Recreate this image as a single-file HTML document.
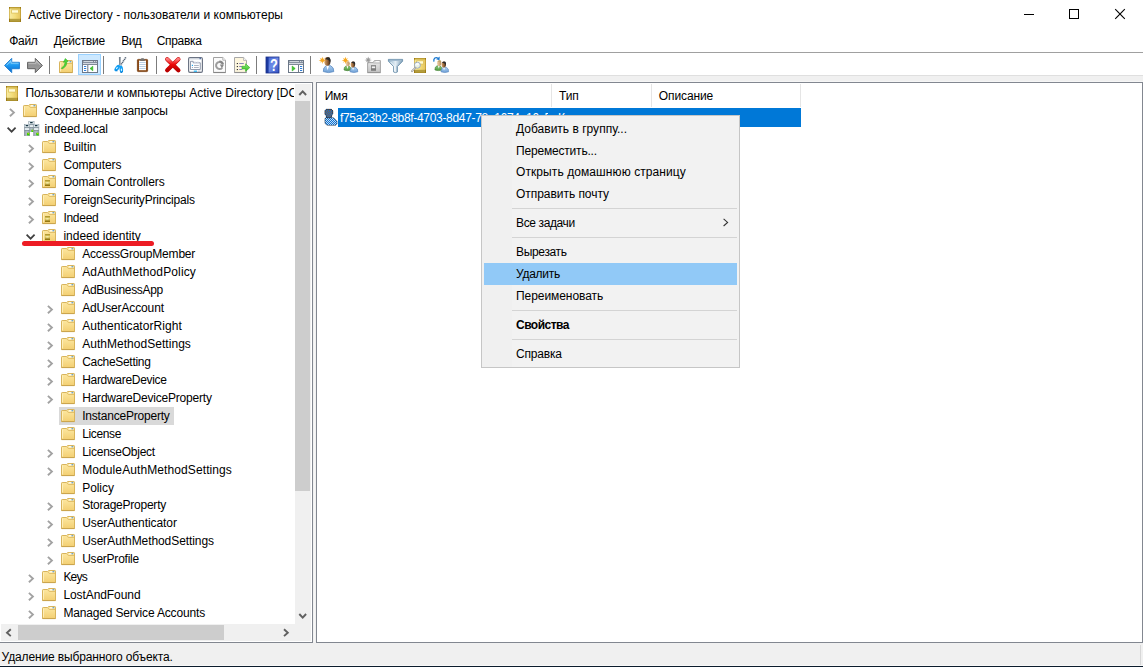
<!DOCTYPE html>
<html lang="ru"><head><meta charset="utf-8"><title>Active Directory - пользователи и компьютеры</title>
<style>
html,body{margin:0;padding:0;}
body{width:1143px;height:667px;position:relative;overflow:hidden;background:#fff;font-family:"Liberation Sans",sans-serif;font-size:12px;color:#000;}
.a{position:absolute;}
.t{position:absolute;white-space:nowrap;line-height:14px;height:14px;}
svg{position:absolute;overflow:visible;}
</style></head><body>

<svg width="0" height="0" style="left:0;top:0"><defs>
<linearGradient id="gFold" x1="0" y1="0" x2="0" y2="1"><stop offset="0" stop-color="#fde9a4"/><stop offset="1" stop-color="#f3cf72"/></linearGradient>
<linearGradient id="gBook" x1="0" y1="0" x2="1" y2="0"><stop offset="0" stop-color="#f8eca6"/><stop offset="0.5" stop-color="#f3de7c"/><stop offset="1" stop-color="#e4c25a"/></linearGradient>
<linearGradient id="gOuSq" x1="0" y1="0" x2="0" y2="1"><stop offset="0" stop-color="#a88c22"/><stop offset="0.45" stop-color="#ead97a"/><stop offset="1" stop-color="#866600"/></linearGradient>
<linearGradient id="gSrv" x1="0" y1="0" x2="1" y2="0"><stop offset="0" stop-color="#8c99a3"/><stop offset="0.5" stop-color="#b4c0c8"/><stop offset="1" stop-color="#8996a0"/></linearGradient>
<pattern id="dith" width="2" height="2" patternUnits="userSpaceOnUse"><rect width="2" height="2" fill="#8a5e3a"/><rect width="1" height="1" fill="#0a6cd2"/><rect x="1" y="1" width="1" height="1" fill="#0a6cd2"/></pattern>
<pattern id="dithb" width="2" height="2" patternUnits="userSpaceOnUse"><rect width="2" height="2" fill="#c8dcf0"/><rect width="1" height="1" fill="#0a74d8"/><rect x="1" y="1" width="1" height="1" fill="#0a74d8"/></pattern>

<g id="folder">
 <path d="M0.5,12.5 L0.5,2.2 Q0.5,1.5 1.2,1.5 L5.6,1.5 L6.8,0.5 L12.8,0.5 Q13.5,0.5 13.5,1.2 L13.5,12.5 Z" fill="url(#gFold)" stroke="#d8b45c" stroke-width="1"/>
 <path d="M5.8,1.8 L7.2,3.5 L13,3.5" fill="none" stroke="#e3c06a" stroke-width="1"/>
 <path d="M1.5,2.5 L1.5,11.5" stroke="#fff3c4" stroke-width="1" fill="none" opacity=".8"/>
 <rect x="8" y="1.3" width="2.6" height="1.05" fill="#fff"/><rect x="10.4" y="1.3" width="2" height="1.05" rx=".5" fill="#3c8ee6"/>
 <line x1="0.5" y1="12.6" x2="13.5" y2="12.6" stroke="#c9a44e" stroke-width="1"/>
</g>
<g id="ou">
 <use href="#folder"/>
 <rect x="3" y="5" width="5" height="6" fill="url(#gOuSq)"/>
 <rect x="4.2" y="7" width="2.4" height="1.6" fill="#f6eeb0" opacity=".8"/>
</g>
<g id="book">
 <rect x="0" y="0" width="12" height="15" fill="url(#gBook)"/>
 <rect x="0" y="0" width="12" height="1.5" fill="#bb9c34"/>
 <rect x="0" y="1.5" width="12" height=".7" fill="#dcc460" opacity=".8"/>
 <rect x="0" y="11.8" width="12" height="3.2" fill="#b39c3c"/>
 <rect x="0" y="14.3" width="12" height=".7" fill="#a88c28"/>
 <rect x="0" y="0" width="0.8" height="15" fill="#c29e30" opacity=".75"/>
 <rect x="11.2" y="0" width="0.8" height="15" fill="#b08c24" opacity=".75"/>
 <rect x="0" y="0" width="1" height="1.5" fill="#9c7a16"/><rect x="11" y="0" width="1" height="1.5" fill="#9c7a16"/>
 <rect x="0" y="11.8" width="1" height="3.2" fill="#9c7a16"/><rect x="11" y="11.8" width="1" height="3.2" fill="#9c7a16"/>
 <rect x="2.6" y="2.8" width="6.8" height="3.3" fill="#fffbd6" stroke="#dcc058" stroke-width=".8"/>
</g>
<g id="srv1">
 <rect x="0" y="0" width="6" height="12" fill="url(#gSrv)"/>
 <rect x="0.6" y="0.6" width="4.8" height="2.6" fill="#e2ecf1"/>
 <rect x="1.6" y="1.1" width="2.8" height="1.2" rx=".6" fill="#14313e"/>
 <rect x="0.8" y="4.2" width="4.4" height="1.7" fill="#ecf3f6"/>
 <rect x="0.6" y="3.5" width="4.8" height=".5" fill="#6f7c86"/>
 <rect x="0.6" y="6.4" width="4.8" height=".5" fill="#6f7c86"/>
 <rect x="3" y="8.8" width="2.4" height="2.6" fill="#35cf00"/>
 <rect x="3.8" y="8.8" width="1.4" height="1.2" fill="#c5e000" opacity=".8"/>
</g>
<g id="domain">
 <use href="#srv1" x="4.4" y="0" />
 <rect x="4.4" y="11" width="6" height="1" fill="#fff"/>
 <use href="#srv1" x="0" y="3"/>
 <use href="#srv1" x="9.2" y="3"/>
</g>
<g id="userdim">
 <path shape-rendering="crispEdges" d="M1,9.4 L2.6,8.4 L7.6,8.4 L9.6,8.8 L11.4,10.4 L13,12.6 L13,14.6 L11.6,16.4 L3.6,16.4 L1.4,15 L0.9,13 Z" fill="url(#dithb)"/>
 <path d="M1,9.4 L2.6,8.4 L7.6,8.4 L9.6,8.8 L11.4,10.4 L13,12.6 L13,14.6 L11.6,16.4 L3.6,16.4 L1.4,15 L0.9,13 Z" fill="none" stroke="#0d2a4a" stroke-width=".9" opacity=".6"/>
 <path shape-rendering="crispEdges" d="M2,0.3 L7.4,0.3 L8.8,1.8 L8.8,5 L7.8,6.6 L7.2,8.8 L2.8,8.8 L2,6.6 L0.8,5 L0.8,1.8 Z" fill="url(#dith)"/>
 <path d="M2,0.3 L7.4,0.3 L8.8,1.8 L8.8,5 L7.8,6.6 L7.2,8.8 L2.8,8.8 L2,6.6 L0.8,5 L0.8,1.8 Z" fill="none" stroke="#14202e" stroke-width=".9" opacity=".6"/>
</g>
</defs></svg>

<div class="a" style="left:0;top:52px;width:1143px;height:1px;background:#a0a0a0"></div>
<div class="a" style="left:0;top:75px;width:1143px;height:1px;background:#dfdfdf"></div>
<div class="a" style="left:0;top:76px;width:1143px;height:6px;background:#f0f0f0"></div>
<div class="a" style="left:0;top:81px;width:1143px;height:1px;background:#f6f6f6"></div>
<div class="a" style="left:313px;top:76px;width:3px;height:567px;background:#f0f0f0"></div>
<div class="a" style="left:314px;top:83px;width:1px;height:559px;background:#f7f7f7"></div>
<div class="a" style="left:-1px;top:82px;width:312px;height:559px;border:1px solid #828790;background:#fff;box-sizing:content-box"></div>
<div class="a" style="left:316px;top:82px;width:825px;height:559px;border:1px solid #828790;background:#fff;box-sizing:content-box"></div>
<div class="a" style="left:0;top:643px;width:1143px;height:23px;background:#f0f0f0"></div>
<div class="a" style="left:0;top:665px;width:1143px;height:1px;background:#f8f8f8"></div>
<div class="a" style="left:0;top:666px;width:1143px;height:1px;background:#0c1c2c"></div>
<div class="a" style="left:1140px;top:645px;width:1px;height:20px;background:#d7d7d7"></div>
<svg style="left:0;top:0" width="1143" height="30"><g stroke="#000" stroke-width="1" fill="none" shape-rendering="crispEdges"><line x1="1024" y1="14.5" x2="1034" y2="14.5"/><rect x="1069.5" y="9.5" width="9" height="9"/></g><g stroke="#000" stroke-width="1.1" fill="none"><line x1="1115.2" y1="9.2" x2="1124.8" y2="18.8"/><line x1="1124.8" y1="9.2" x2="1115.2" y2="18.8"/></g></svg>
<svg style="left:0;top:0" width="460" height="80">
<defs>
<linearGradient id="gBack" x1="0" y1="0" x2="0" y2="1"><stop offset="0" stop-color="#6ccaff"/><stop offset="0.5" stop-color="#1c98f0"/><stop offset="1" stop-color="#0a68cc"/></linearGradient>
<linearGradient id="gFwd" x1="0" y1="0" x2="0" y2="1"><stop offset="0" stop-color="#bcbcbc"/><stop offset="0.5" stop-color="#949494"/><stop offset="1" stop-color="#a4a4a4"/></linearGradient>
<linearGradient id="gRed" x1="0" y1="0" x2="0" y2="1"><stop offset="0" stop-color="#ff7a7a"/><stop offset="0.45" stop-color="#f00808"/><stop offset="1" stop-color="#b80000"/></linearGradient>
<linearGradient id="gHelp" x1="0" y1="0" x2="1" y2="1"><stop offset="0" stop-color="#3f5fd0"/><stop offset="0.5" stop-color="#6c8ae6"/><stop offset="1" stop-color="#2f4fc0"/></linearGradient>
<linearGradient id="gGreenA" x1="0" y1="0" x2="0" y2="1"><stop offset="0" stop-color="#8cf27a"/><stop offset="1" stop-color="#2fb41e"/></linearGradient>
<linearGradient id="gFun" x1="0" y1="0" x2="1" y2="0"><stop offset="0" stop-color="#8eb0c8"/><stop offset="0.5" stop-color="#e4eef5"/><stop offset="1" stop-color="#7e9fb8"/></linearGradient>
<linearGradient id="gBody" x1="0" y1="0" x2="0" y2="1"><stop offset="0" stop-color="#a9cdf0"/><stop offset="1" stop-color="#6fa0d6"/></linearGradient>
<linearGradient id="gBodyG" x1="0" y1="0" x2="0" y2="1"><stop offset="0" stop-color="#8cc878"/><stop offset="1" stop-color="#4f9a3c"/></linearGradient>
<linearGradient id="gFace" x1="0" y1="0" x2="1" y2="0"><stop offset="0" stop-color="#d9a56c"/><stop offset="0.6" stop-color="#8a5a30"/><stop offset="1" stop-color="#3a2a20"/></linearGradient>
<linearGradient id="gFaceL" x1="0" y1="0" x2="1" y2="0"><stop offset="0" stop-color="#f0d2a8"/><stop offset="1" stop-color="#b89060"/></linearGradient>
<linearGradient id="gGrayF" x1="0" y1="0" x2="0" y2="1"><stop offset="0" stop-color="#ececec"/><stop offset="1" stop-color="#c4c4c4"/></linearGradient>
<g id="star"><path d="M0,-3.6 L0.8,-1.2 L2.6,-2.6 L1.3,-0.6 L3.7,0 L1.3,0.7 L2.6,2.6 L0.7,1.3 L0,3.7 L-0.7,1.3 L-2.6,2.6 L-1.3,0.7 L-3.7,0 L-1.3,-0.6 L-2.6,-2.6 L-0.8,-1.2 Z"/></g>
</defs>
<!-- separators -->
<g fill="#7c7c7c"><rect x="49" y="56" width="1" height="18"/><rect x="103" y="56" width="1" height="18"/><rect x="156" y="56" width="1" height="18"/><rect x="256" y="56" width="1" height="18"/><rect x="310" y="56" width="1" height="18"/></g>
<!-- back -->
<path d="M4.6,65.5 L11.7,58.4 L11.7,62.3 L19.4,62.3 L19.4,68.7 L11.7,68.7 L11.7,72.6 Z" fill="url(#gBack)" stroke="#1f7ed2" stroke-width="1" stroke-linejoin="round"/>
<path d="M6.5,65.3 L11,60.8 L11,63.2 L18.6,63.2" fill="none" stroke="#9fdcff" stroke-width=".8" opacity=".9"/>
<!-- forward -->
<path d="M42.4,65.5 L35.3,58.4 L35.3,62.3 L27.6,62.3 L27.6,68.7 L35.3,68.7 L35.3,72.6 Z" fill="url(#gFwd)" stroke="#5e5e5e" stroke-width="1" stroke-linejoin="round"/>
<path d="M28.4,63.2 L36,63.2 L36,60.8 L40.5,65.3" fill="none" stroke="#d0d0d0" stroke-width=".8" opacity=".8"/>
<!-- up folder -->
<g transform="translate(59,60)"><use href="#folder"/></g>
<path d="M61.3,68.3 Q65.3,65.6 65.2,61.8 L63.4,62.3 L65.4,58.5 L68.2,61.4 L66.7,61.6 Q67.2,66.4 62,69 Z" fill="#4ad83a" stroke="#2fb022" stroke-width=".6" stroke-linejoin="round"/>
<!-- show tree (highlighted) -->
<rect x="78.5" y="54.5" width="22" height="20" fill="#cce8ff" stroke="#99d1ff" stroke-width="1"/>
<g transform="translate(82,60)">
 <rect x="0.5" y="0.5" width="15" height="12" fill="#fff" stroke="#6c7888" stroke-width="1"/>
 <rect x="1" y="1" width="14" height="4" fill="#7f8a99"/>
 <rect x="1.5" y="1.15" width="9.5" height=".9" fill="#dfe4ea"/><rect x="12" y="1.1" width=".9" height=".9" fill="#eef1f5"/><rect x="13.8" y="1.1" width=".9" height=".9" fill="#eef1f5"/>
 <rect x="1" y="2.95" width="14" height="1" fill="#d8dde5"/>
 <rect x="5.3" y="5" width="1" height="7.2" fill="#6c7888"/>
 <rect x="2" y="6" width="2.2" height="1" fill="#2f7ed8"/><rect x="2" y="8" width="2.2" height="1" fill="#2f7ed8"/><rect x="2" y="10" width="2.2" height="1" fill="#2f7ed8"/>
 <path d="M10.8,6.2 L10.8,10.8 L8,8.5 Z" fill="#3fc52f" stroke="#2fae22" stroke-width=".6" stroke-linejoin="round"/>
</g>
<!-- scissors -->
<g>
 <path d="M118.9,57.1 L120.9,57.1 L120.6,62 L120.2,65.6 L119.2,65.6 Z" fill="#76828e"/>
 <path d="M120.2,57.6 L120.6,57.6 L120.3,63 Z" fill="#cfd6dd"/>
 <path d="M125.8,57.4 L120.6,65.2" stroke="#46566a" stroke-width="1.7" stroke-dasharray="1.1,0.7" fill="none"/>
 <ellipse cx="117.2" cy="68.1" rx="2" ry="3.7" transform="rotate(36 117.2 68.1)" fill="#12a0f6"/>
 <ellipse cx="116.9" cy="68" rx=".6" ry="1.2" transform="rotate(36 116.9 68)" fill="#fff"/>
 <ellipse cx="121.3" cy="69.2" rx="1.75" ry="3.7" transform="rotate(-6 121.3 69.2)" fill="#12a0f6"/>
 <ellipse cx="121.4" cy="69.8" rx=".55" ry="1.35" fill="#fff"/>
 <path d="M120.2,72 Q121.6,73.2 122.8,71.4" stroke="#0a5fae" stroke-width=".7" fill="none"/>
 <path d="M115.4,69.6 Q116,71 117.4,71" stroke="#0a6cc4" stroke-width=".6" fill="none"/>
</g>
<!-- clipboard -->
<g>
 <rect x="137.4" y="59.4" width="10.2" height="12.2" rx=".8" fill="#8a4a16" stroke="#7a3f10" stroke-width=".8"/>
 <rect x="139" y="60.6" width="7" height="9.6" fill="#fff"/>
 <g fill="#a9c4dc"><rect x="139.3" y="62.2" width="6.4" height=".8"/><rect x="139.3" y="64.2" width="6.4" height=".8"/><rect x="139.3" y="66.2" width="6.4" height=".8"/><rect x="139.3" y="68.2" width="6.4" height=".8"/></g>
 <rect x="140.2" y="59.1" width="4.6" height="1.8" fill="#6e6e6e"/><rect x="141.2" y="58" width="2.6" height="1.3" fill="#8e8e8e"/>
</g>
<!-- delete X -->
<g stroke-linecap="round">
 <path d="M167.2,59.2 L178.4,70.3 M178.4,59.2 L167.2,70.3" stroke="#c40000" stroke-width="4.2" fill="none"/>
 <path d="M167.2,59.2 L178.4,70.3 M178.4,59.2 L167.2,70.3" stroke="url(#gRed)" stroke-width="3.2" fill="none"/>
</g>
<!-- properties -->
<g transform="translate(188,57)">
 <rect x="0.6" y="0.6" width="13.8" height="14.8" rx="1.3" fill="#fff" stroke="#6c7484" stroke-width="1.2"/>
 <rect x="1.4" y="1.4" width="12.2" height="1" fill="#c9d0da"/><rect x="11.6" y="0.8" width="1.2" height="1.4" fill="#3a5a9c"/>
 <path d="M2.5,12.5 L2.5,4.3 L5.2,4.3 L5.2,5.8 L12.3,5.8 L12.3,12.5 Z" fill="#fdfdff" stroke="#8790a4" stroke-width=".9"/>
 <rect x="6" y="4.6" width="2" height="1" fill="#d9deea"/><rect x="8.8" y="4.6" width="2" height="1" fill="#d9deea"/>
 <rect x="3.8" y="7.8" width="1.2" height="1.2" fill="#1fa8f0"/><rect x="6" y="8" width="4.8" height=".8" fill="#9aa2b2"/>
 <rect x="3.9" y="10" width="1" height="1" fill="#9aa2b2"/><rect x="6" y="10.1" width="4.8" height=".8" fill="#9aa2b2"/>
 <rect x="5.8" y="13.6" width="3.2" height="1.2" fill="#1fb4f5"/><rect x="10" y="13.6" width="2.6" height="1.2" fill="#c0c4cc"/>
</g>
<!-- refresh doc -->
<g transform="translate(213,57)">
 <path d="M0.5,0.5 L9.8,0.5 L12.5,3.2 L12.5,15.4 L0.5,15.4 Z" fill="#fbfbfb" stroke="#a2a2a2" stroke-width="1"/>
 <path d="M9.8,0.5 L9.8,3.2 L12.5,3.2" fill="#fff" stroke="#a2a2a2" stroke-width=".8"/>
 <path d="M0.3,15.6 L12.7,15.6" stroke="#7e7e7e" stroke-width=".9"/>
 <path d="M9.2,10.8 A3.5,3.5 0 1 1 9.9,7.4" fill="none" stroke="#9c9c9c" stroke-width="2"/>
 <path d="M6.4,4.6 A3.5,3.5 0 0 1 9.9,7.4" fill="none" stroke="#868686" stroke-width="2"/>
 <path d="M6.8,7.6 L10.9,7.8 L9,11.4 Z" fill="#8a8a8a"/>
</g>
<!-- export list -->
<g transform="translate(234,57)">
 <path d="M0.5,0.5 L9.6,0.5 L12.5,3.4 L12.5,15.4 L0.5,15.4 Z" fill="#fdf6de" stroke="#a8a8a8" stroke-width="1"/>
 <path d="M9.6,0.5 L9.6,3.4 L12.5,3.4" fill="#fff" stroke="#a8a8a8" stroke-width=".8"/>
 <path d="M0.3,15.6 L12.7,15.6" stroke="#8a8a8a" stroke-width=".9"/>
 <g fill="#222"><rect x="2.8" y="6" width="1.1" height="1.1"/><rect x="2.8" y="9" width="1.1" height="1.1"/><rect x="2.8" y="12" width="1.1" height="1.1"/></g>
 <g fill="#7a78b8"><rect x="5.2" y="6.1" width="4.6" height=".9"/><rect x="5.2" y="9.1" width="3" height=".9"/><rect x="5.2" y="12.1" width="3" height=".9"/></g>
 <path d="M8,9.3 L11.6,9.3 L11.6,6.8 L15.8,10.6 L11.6,14.4 L11.6,11.9 L8,11.9 Z" fill="url(#gGreenA)" stroke="#3cb82c" stroke-width=".7" stroke-linejoin="round"/>
</g>
<!-- help -->
<g transform="translate(266,57)">
 <rect x="0" y="0" width="13" height="16" fill="url(#gHelp)"/>
 <rect x="0" y="0" width="2.6" height="16" fill="#1c3aa0"/>
 <rect x="0" y="0" width="13" height="16" fill="none" stroke="#1a2f8a" stroke-width=".8"/>
 <text transform="translate(7.9,13.8) scale(0.78,1)" x="0" y="0" text-anchor="middle" font-family="Liberation Sans, sans-serif" font-weight="bold" font-size="16.4px" fill="#fff">?</text>
</g>
<!-- action pane -->
<g transform="translate(288,60)">
 <rect x="0.5" y="0.5" width="15" height="12" fill="#fff" stroke="#6c7888" stroke-width="1"/>
 <rect x="1" y="1" width="14" height="4" fill="#7f8a99"/>
 <rect x="1.5" y="1.15" width="9.5" height=".9" fill="#dfe4ea"/><rect x="12" y="1.1" width=".9" height=".9" fill="#eef1f5"/><rect x="13.8" y="1.1" width=".9" height=".9" fill="#eef1f5"/>
 <rect x="1" y="2.95" width="14" height="1" fill="#d8dde5"/>
 <rect x="10" y="5" width="1" height="7.2" fill="#6c7888"/>
 <rect x="12" y="6" width="2.2" height="1" fill="#2f7ed8"/><rect x="12" y="8" width="2.2" height="1" fill="#2f7ed8"/><rect x="12" y="10" width="2.2" height="1" fill="#2f7ed8"/>
 <path d="M4.2,6 L4.2,11 L7.2,8.5 Z" fill="#3fc52f" stroke="#2fae22" stroke-width=".6" stroke-linejoin="round"/>
</g>
<!-- new user -->
<g>
 <path d="M323.3,71.6 Q323,67.2 326.2,65.7 L330.6,65.7 Q334,67.2 333.8,71.6 Q328.5,73.6 323.3,71.6 Z" fill="url(#gBody)" stroke="#4f80ba" stroke-width=".7"/>
 <path d="M326.4,65.8 L327.6,70.2 L329,65.8 Z" fill="#fff"/>
 <ellipse cx="327.4" cy="61.4" rx="3" ry="4.3" fill="url(#gFace)"/>
 <path d="M325.2,59.2 Q326.8,56.4 329.6,57.6 Q331.2,59.4 330.2,62.6 Q329.6,59.6 325.2,59.2 Z" fill="#2b2b2b"/>
 <use href="#star" x="322.3" y="60.3" fill="#f7a81e"/>
</g>
<!-- new group -->
<g>
 <path d="M344,70 Q343.8,66.8 346,65.9 L349,65.9 Q351,66.8 350.8,70 Q347.4,71.4 344,70 Z" fill="url(#gBodyG)" stroke="#3f7e30" stroke-width=".6"/>
 <path d="M346.6,66 L347.4,69 L348.3,66 Z" fill="#fff"/>
 <ellipse cx="347.8" cy="63.6" rx="2" ry="2.7" fill="url(#gFaceL)"/>
 <path d="M350,71.8 Q349.8,68.4 352,67.5 L355.6,67.5 Q358,68.4 357.8,71.8 Q353.9,73.3 350,71.8 Z" fill="url(#gBody)" stroke="#4f80ba" stroke-width=".6"/>
 <path d="M352.2,67.6 L353,70.6 L354,67.6 Z" fill="#fff"/>
 <ellipse cx="352.9" cy="64.5" rx="2.2" ry="3" fill="url(#gFace)"/>
 <path d="M351.2,62.8 Q352.6,60.8 354.6,61.8 Q355.6,63 355,65 Q354.4,63 351.2,62.8 Z" fill="#2b2b2b"/>
 <use href="#star" x="345.4" y="60.3" fill="#f7a81e"/>
</g>
<!-- new OU -->
<g>
 <path d="M367.6,72.4 L367.6,62.6 L373.2,62.6 L374.4,60.6 L380.4,60.6 L380.4,72.4 Z" fill="url(#gGrayF)" stroke="#9c9c9c" stroke-width=".9"/>
 <path d="M373.4,63 L380,63" stroke="#a8a8a8" stroke-width=".7"/>
 <rect x="375.8" y="61.2" width="3.4" height=".9" fill="#fff"/>
 <rect x="371" y="65.2" width="5" height="5.6" fill="#7c7c7c"/><rect x="371.8" y="66.4" width="3.4" height="1.8" fill="#f2f2f2"/>
 <path d="M367.3,72.7 L380.7,72.7" stroke="#8a8a8a" stroke-width=".8"/>
 <use href="#star" x="368.2" y="60" fill="#9a9a9a"/>
</g>
<!-- filter -->
<g>
 <path d="M388.4,59.4 L402.6,59.4 L402.6,61.2 L397.4,66.6 L397.4,72 Q395.5,73.2 393.6,72 L393.6,66.6 L388.4,61.2 Z" fill="url(#gFun)" stroke="#6a8eaa" stroke-width=".9" stroke-linejoin="round"/>
 <rect x="388.6" y="59.5" width="13.8" height="1.5" fill="#7f9fb8"/>
 <rect x="389.4" y="59.9" width="12.2" height=".6" fill="#c4d6e4"/>
 <path d="M390.6,62 L394.6,66.2 L394.6,71.4" stroke="#f6fafc" stroke-width=".9" fill="none"/>
 <path d="M400.6,62 L396.6,66.2 L396.6,71.6" stroke="#7f9fb8" stroke-width=".6" fill="none" opacity=".7"/>
</g>
<!-- find -->
<g>
 <g transform="translate(414,58)"><use href="#book"/></g>
 <path d="M415.4,67.8 L411.9,71.2" stroke="#a8a8a8" stroke-width="1.9" stroke-linecap="round"/>
 <path d="M415.2,68 L412,71.1" stroke="#f4f4f4" stroke-width="1" stroke-dasharray=".9,.7"/>
 <circle cx="417.4" cy="65.2" r="3" fill="#e4f0f8" fill-opacity=".92" stroke="#8f9eb4" stroke-width=".8"/>
 <ellipse cx="417.2" cy="64.2" rx="1.8" ry="1.2" fill="#ffffff" opacity=".75"/>
 <ellipse cx="417.5" cy="66.3" rx="1.6" ry="1.1" fill="#f2f4c8" opacity=".6"/>
</g>
<!-- add to group -->
<g>
 <path d="M434.9,69.9 Q434.7,66.7 437,65.8 L440,65.8 Q442,66.7 441.8,69.9 Q438.4,71.3 434.9,69.9 Z" fill="url(#gBodyG)" stroke="#3f7e30" stroke-width=".6"/>
 <path d="M438,65.8 L438.8,68.8 L439.7,65.8 Z" fill="#fff"/>
 <ellipse cx="439.2" cy="63.3" rx="2.1" ry="2.8" fill="url(#gFaceL)"/>
 <path d="M437.4,61.8 Q438.8,59.8 440.8,60.6 Q441.4,61.4 441.2,62.2 Q439.8,61.2 437.4,61.8 Z" fill="#b8a060"/>
 <path d="M441,71.8 Q440.8,68.4 443,67.5 L446.6,67.5 Q448.8,68.4 448.6,71.8 Q444.8,73.3 441,71.8 Z" fill="url(#gBody)" stroke="#4f80ba" stroke-width=".6"/>
 <path d="M443.2,67.6 L444,70.6 L445,67.6 Z" fill="#fff"/>
 <ellipse cx="443.8" cy="64.4" rx="2.2" ry="3" fill="url(#gFace)"/>
 <path d="M442,62.8 Q443.4,60.8 445.4,61.8 Q446.4,63 445.8,65 Q445.2,63 442,62.8 Z" fill="#2b2b2b"/>
 <path d="M433.9,61.6 C433.2,58.2 435.8,56.7 438,58.2" fill="none" stroke="#1a78d0" stroke-width="1.3"/>
 <path d="M439.7,56.6 L439.5,60.3 L436.2,59.3 Z" fill="#1a78d0"/>
</g>
</svg>

<div class="a" style="left:295px;top:84px;width:16px;height:540px;background:#f0f0f0"></div>
<div class="a" style="left:295px;top:101px;width:15px;height:390px;background:#cdcdcd"></div>
<div class="a" style="left:1px;top:624px;width:310px;height:17px;background:#f0f0f0"></div>
<div class="a" style="left:18px;top:625px;width:206px;height:15px;background:#cdcdcd"></div>
<svg style="left:0;top:0" width="320" height="667"><g fill="none" stroke="#606060" stroke-width="1.9"><polyline points="299.3,95 302.7,91.3 306.1,95"/><polyline points="299.3,614 302.7,617.7 306.1,614"/><polyline points="10.8,629.3 7,632.7 10.8,636.1"/><polyline points="284,629.3 287.8,632.7 284,636.1"/></g></svg>
<svg style="left:6px;top:86px" width="12" height="15"><use href="#book"/></svg>
<span class="t" id="tr0" style="left:25.4px;top:86px;width:268.6px;overflow:hidden;letter-spacing:-0.009px;">Пользователи и компьютеры Active Directory [DC1.indeed.local]</span>
<svg style="left:8.9px;top:108px" width="8" height="12"><polyline points="0.9,0.9 4.9,4.6 0.9,8.3" fill="none" stroke="#a2a2a2" stroke-width="1.9"/></svg>
<svg style="left:23px;top:104px" width="14" height="13"><use href="#folder"/></svg>
<span class="t" id="tr1" style="left:44.4px;top:104px;letter-spacing:-0.157px;">Сохраненные запросы</span>
<svg style="left:6.9px;top:126.5px" width="12" height="8"><polyline points="0.6,0.6 4.6,4.7 8.6,0.6" fill="none" stroke="#404040" stroke-width="1.7"/></svg>
<svg style="left:24px;top:121px" width="16" height="16"><use href="#domain"/></svg>
<span class="t" id="tr2" style="left:44.4px;top:122px;letter-spacing:-0.047px;">indeed.local</span>
<svg style="left:27.9px;top:144px" width="8" height="12"><polyline points="0.9,0.9 4.9,4.6 0.9,8.3" fill="none" stroke="#a2a2a2" stroke-width="1.9"/></svg>
<svg style="left:42px;top:140px" width="14" height="13"><use href="#folder"/></svg>
<span class="t" id="tr3" style="left:63.4px;top:140px;letter-spacing:0.030px;">Builtin</span>
<svg style="left:27.9px;top:162px" width="8" height="12"><polyline points="0.9,0.9 4.9,4.6 0.9,8.3" fill="none" stroke="#a2a2a2" stroke-width="1.9"/></svg>
<svg style="left:42px;top:158px" width="14" height="13"><use href="#folder"/></svg>
<span class="t" id="tr4" style="left:63.4px;top:158px;letter-spacing:-0.076px;">Computers</span>
<svg style="left:27.9px;top:179px" width="8" height="12"><polyline points="0.9,0.9 4.9,4.6 0.9,8.3" fill="none" stroke="#a2a2a2" stroke-width="1.9"/></svg>
<svg style="left:42px;top:175px" width="14" height="13"><use href="#ou"/></svg>
<span class="t" id="tr5" style="left:63.4px;top:175px;letter-spacing:-0.084px;">Domain Controllers</span>
<svg style="left:27.9px;top:197px" width="8" height="12"><polyline points="0.9,0.9 4.9,4.6 0.9,8.3" fill="none" stroke="#a2a2a2" stroke-width="1.9"/></svg>
<svg style="left:42px;top:193px" width="14" height="13"><use href="#folder"/></svg>
<span class="t" id="tr6" style="left:63.4px;top:193px;letter-spacing:-0.186px;">ForeignSecurityPrincipals</span>
<svg style="left:27.9px;top:215px" width="8" height="12"><polyline points="0.9,0.9 4.9,4.6 0.9,8.3" fill="none" stroke="#a2a2a2" stroke-width="1.9"/></svg>
<svg style="left:42px;top:211px" width="14" height="13"><use href="#ou"/></svg>
<span class="t" id="tr7" style="left:63.4px;top:211px;letter-spacing:-0.267px;">Indeed</span>
<svg style="left:25.9px;top:233.5px" width="12" height="8"><polyline points="0.6,0.6 4.6,4.7 8.6,0.6" fill="none" stroke="#404040" stroke-width="1.7"/></svg>
<svg style="left:42px;top:229px" width="14" height="13"><use href="#ou"/></svg>
<span class="t" id="tr8" style="left:63.4px;top:229px;letter-spacing:0.001px;">indeed identity</span>
<svg style="left:61px;top:247px" width="14" height="13"><use href="#folder"/></svg>
<span class="t" id="tr9" style="left:82.2px;top:247px;letter-spacing:-0.179px;">AccessGroupMember</span>
<svg style="left:61px;top:265px" width="14" height="13"><use href="#folder"/></svg>
<span class="t" id="tr10" style="left:82.2px;top:265px;letter-spacing:0.133px;">AdAuthMethodPolicy</span>
<svg style="left:61px;top:283px" width="14" height="13"><use href="#folder"/></svg>
<span class="t" id="tr11" style="left:82.2px;top:283px;letter-spacing:-0.303px;">AdBusinessApp</span>
<svg style="left:46.7px;top:305px" width="8" height="12"><polyline points="0.9,0.9 4.9,4.6 0.9,8.3" fill="none" stroke="#a2a2a2" stroke-width="1.9"/></svg>
<svg style="left:61px;top:301px" width="14" height="13"><use href="#folder"/></svg>
<span class="t" id="tr12" style="left:82.2px;top:301px;letter-spacing:-0.129px;">AdUserAccount</span>
<svg style="left:46.7px;top:323px" width="8" height="12"><polyline points="0.9,0.9 4.9,4.6 0.9,8.3" fill="none" stroke="#a2a2a2" stroke-width="1.9"/></svg>
<svg style="left:61px;top:319px" width="14" height="13"><use href="#folder"/></svg>
<span class="t" id="tr13" style="left:82.2px;top:319px;letter-spacing:0.048px;">AuthenticatorRight</span>
<svg style="left:46.7px;top:341px" width="8" height="12"><polyline points="0.9,0.9 4.9,4.6 0.9,8.3" fill="none" stroke="#a2a2a2" stroke-width="1.9"/></svg>
<svg style="left:61px;top:337px" width="14" height="13"><use href="#folder"/></svg>
<span class="t" id="tr14" style="left:82.2px;top:337px;letter-spacing:0.035px;">AuthMethodSettings</span>
<svg style="left:46.7px;top:359px" width="8" height="12"><polyline points="0.9,0.9 4.9,4.6 0.9,8.3" fill="none" stroke="#a2a2a2" stroke-width="1.9"/></svg>
<svg style="left:61px;top:355px" width="14" height="13"><use href="#folder"/></svg>
<span class="t" id="tr15" style="left:82.2px;top:355px;letter-spacing:-0.312px;">CacheSetting</span>
<svg style="left:46.7px;top:377px" width="8" height="12"><polyline points="0.9,0.9 4.9,4.6 0.9,8.3" fill="none" stroke="#a2a2a2" stroke-width="1.9"/></svg>
<svg style="left:61px;top:373px" width="14" height="13"><use href="#folder"/></svg>
<span class="t" id="tr16" style="left:82.2px;top:373px;letter-spacing:-0.300px;">HardwareDevice</span>
<svg style="left:46.7px;top:395px" width="8" height="12"><polyline points="0.9,0.9 4.9,4.6 0.9,8.3" fill="none" stroke="#a2a2a2" stroke-width="1.9"/></svg>
<svg style="left:61px;top:391px" width="14" height="13"><use href="#folder"/></svg>
<span class="t" id="tr17" style="left:82.2px;top:391px;letter-spacing:-0.207px;">HardwareDeviceProperty</span>
<div class="a" style="left:59px;top:407px;width:115px;height:18px;background:#d9d9d9"></div>
<svg style="left:61px;top:409px" width="14" height="13"><use href="#folder"/></svg>
<span class="t" id="tr18" style="left:82.2px;top:409px;letter-spacing:-0.207px;">InstanceProperty</span>
<svg style="left:61px;top:427px" width="14" height="13"><use href="#folder"/></svg>
<span class="t" id="tr19" style="left:82.2px;top:427px;letter-spacing:-0.368px;">License</span>
<svg style="left:46.7px;top:449px" width="8" height="12"><polyline points="0.9,0.9 4.9,4.6 0.9,8.3" fill="none" stroke="#a2a2a2" stroke-width="1.9"/></svg>
<svg style="left:61px;top:445px" width="14" height="13"><use href="#folder"/></svg>
<span class="t" id="tr20" style="left:82.2px;top:445px;letter-spacing:-0.257px;">LicenseObject</span>
<svg style="left:46.7px;top:467px" width="8" height="12"><polyline points="0.9,0.9 4.9,4.6 0.9,8.3" fill="none" stroke="#a2a2a2" stroke-width="1.9"/></svg>
<svg style="left:61px;top:463px" width="14" height="13"><use href="#folder"/></svg>
<span class="t" id="tr21" style="left:82.2px;top:463px;letter-spacing:0.098px;">ModuleAuthMethodSettings</span>
<svg style="left:61px;top:481px" width="14" height="13"><use href="#folder"/></svg>
<span class="t" id="tr22" style="left:82.2px;top:481px;letter-spacing:-0.053px;">Policy</span>
<svg style="left:46.7px;top:502px" width="8" height="12"><polyline points="0.9,0.9 4.9,4.6 0.9,8.3" fill="none" stroke="#a2a2a2" stroke-width="1.9"/></svg>
<svg style="left:61px;top:498px" width="14" height="13"><use href="#folder"/></svg>
<span class="t" id="tr23" style="left:82.2px;top:498px;letter-spacing:-0.239px;">StorageProperty</span>
<svg style="left:46.7px;top:520px" width="8" height="12"><polyline points="0.9,0.9 4.9,4.6 0.9,8.3" fill="none" stroke="#a2a2a2" stroke-width="1.9"/></svg>
<svg style="left:61px;top:516px" width="14" height="13"><use href="#folder"/></svg>
<span class="t" id="tr24" style="left:82.2px;top:516px;letter-spacing:-0.085px;">UserAuthenticator</span>
<svg style="left:46.7px;top:538px" width="8" height="12"><polyline points="0.9,0.9 4.9,4.6 0.9,8.3" fill="none" stroke="#a2a2a2" stroke-width="1.9"/></svg>
<svg style="left:61px;top:534px" width="14" height="13"><use href="#folder"/></svg>
<span class="t" id="tr25" style="left:82.2px;top:534px;letter-spacing:-0.073px;">UserAuthMethodSettings</span>
<svg style="left:46.7px;top:556px" width="8" height="12"><polyline points="0.9,0.9 4.9,4.6 0.9,8.3" fill="none" stroke="#a2a2a2" stroke-width="1.9"/></svg>
<svg style="left:61px;top:552px" width="14" height="13"><use href="#folder"/></svg>
<span class="t" id="tr26" style="left:82.2px;top:552px;letter-spacing:-0.233px;">UserProfile</span>
<svg style="left:27.9px;top:574px" width="8" height="12"><polyline points="0.9,0.9 4.9,4.6 0.9,8.3" fill="none" stroke="#a2a2a2" stroke-width="1.9"/></svg>
<svg style="left:42px;top:570px" width="14" height="13"><use href="#folder"/></svg>
<span class="t" id="tr27" style="left:63.4px;top:570px;letter-spacing:-0.797px;">Keys</span>
<svg style="left:27.9px;top:592px" width="8" height="12"><polyline points="0.9,0.9 4.9,4.6 0.9,8.3" fill="none" stroke="#a2a2a2" stroke-width="1.9"/></svg>
<svg style="left:42px;top:588px" width="14" height="13"><use href="#folder"/></svg>
<span class="t" id="tr28" style="left:63.4px;top:588px;letter-spacing:-0.080px;">LostAndFound</span>
<svg style="left:27.9px;top:610px" width="8" height="12"><polyline points="0.9,0.9 4.9,4.6 0.9,8.3" fill="none" stroke="#a2a2a2" stroke-width="1.9"/></svg>
<svg style="left:42px;top:606px" width="14" height="13"><use href="#folder"/></svg>
<span class="t" id="tr29" style="left:63.4px;top:606px;letter-spacing:-0.159px;">Managed Service Accounts</span>
<div class="a" style="left:551px;top:84px;width:1px;height:23px;background:#e5e5e5"></div>
<div class="a" style="left:651px;top:84px;width:1px;height:23px;background:#e5e5e5"></div>
<div class="a" style="left:800px;top:84px;width:1px;height:23px;background:#e5e5e5"></div>
<div class="a" style="left:338px;top:108px;width:463px;height:19px;background:#0078d7"></div>
<svg style="left:324px;top:108.5px" width="14" height="17"><use href="#userdim"/></svg>
<span class="t" id="row" style="left:340px;top:111px;color:#fff;width:208px;overflow:hidden;letter-spacing:-0.317px;">f75a23b2-8b8f-4703-8d47-78a1674e10c5</span>
<span class="t" id="rowtype" style="left:558px;top:111px;color:#fff;">Контакт</span>
<div class="a" style="left:481px;top:115px;width:257px;height:251px;border:1px solid #c6c6c6;background:#f2f2f2;box-sizing:content-box"></div>
<div class="a" style="left:482px;top:116px;width:30px;height:251px;background:#f0f0f0"></div>
<div class="a" style="left:484px;top:263px;width:253px;height:22px;background:#91c9f7"></div>
<div class="a" style="left:512px;top:208px;width:225px;height:1px;background:#d4d4d4"></div>
<div class="a" style="left:512px;top:237px;width:225px;height:1px;background:#d4d4d4"></div>
<div class="a" style="left:512px;top:310px;width:225px;height:1px;background:#d4d4d4"></div>
<div class="a" style="left:512px;top:339px;width:225px;height:1px;background:#d4d4d4"></div>
<svg style="left:723px;top:218px" width="8" height="10"><polyline points="0.6,0.8 4.6,4.4 0.6,8" fill="none" stroke="#333" stroke-width="1.1"/></svg>
<span class="t" id="title" style="left:28.3px;top:8px;letter-spacing:0.030px;">Active Directory - пользователи и компьютеры</span>
<span class="t" id="m1" style="left:9.2px;top:34px;letter-spacing:-0.304px;">Файл</span>
<span class="t" id="m2" style="left:53.8px;top:34px;letter-spacing:-0.196px;">Действие</span>
<span class="t" id="m3" style="left:121.3px;top:34px;letter-spacing:-0.606px;">Вид</span>
<span class="t" id="m4" style="left:156.7px;top:34px;letter-spacing:-0.311px;">Справка</span>
<span class="t" id="h1" style="left:324.7px;top:89px;letter-spacing:-0.192px;">Имя</span>
<span class="t" id="h2" style="left:559px;top:89px;letter-spacing:-0.105px;">Тип</span>
<span class="t" id="h3" style="left:658.8px;top:89px;letter-spacing:-0.102px;">Описание</span>
<span class="t" id="status" style="left:1.6px;top:650px;letter-spacing:-0.130px;">Удаление выбранного объекта.</span>
<span class="t" id="c1" style="left:516px;top:122px;letter-spacing:0.010px;">Добавить в группу...</span>
<span class="t" id="c2" style="left:516px;top:144px;letter-spacing:-0.188px;">Переместить...</span>
<span class="t" id="c3" style="left:516px;top:165px;letter-spacing:0.088px;">Открыть домашнюю страницу</span>
<span class="t" id="c4" style="left:516px;top:187px;letter-spacing:-0.043px;">Отправить почту</span>
<span class="t" id="c5" style="left:516px;top:216px;letter-spacing:-0.376px;">Все задачи</span>
<span class="t" id="c6" style="left:516px;top:245px;letter-spacing:-0.334px;">Вырезать</span>
<span class="t" id="c7" style="left:516px;top:267px;letter-spacing:-0.261px;">Удалить</span>
<span class="t" id="c8" style="left:516px;top:289px;letter-spacing:-0.060px;">Переименовать</span>
<span class="t" id="c9" style="left:516px;top:318px;font-weight:bold;letter-spacing:-0.506px;">Свойства</span>
<span class="t" id="c10" style="left:516px;top:347px;letter-spacing:-0.183px;">Справка</span>
<svg style="left:9px;top:7px" width="12" height="15"><use href="#book"/></svg>
<div class="a" style="left:22px;top:241px;width:132px;height:5px;background:#ed1c24;border-radius:2.5px"></div>
</body></html>
